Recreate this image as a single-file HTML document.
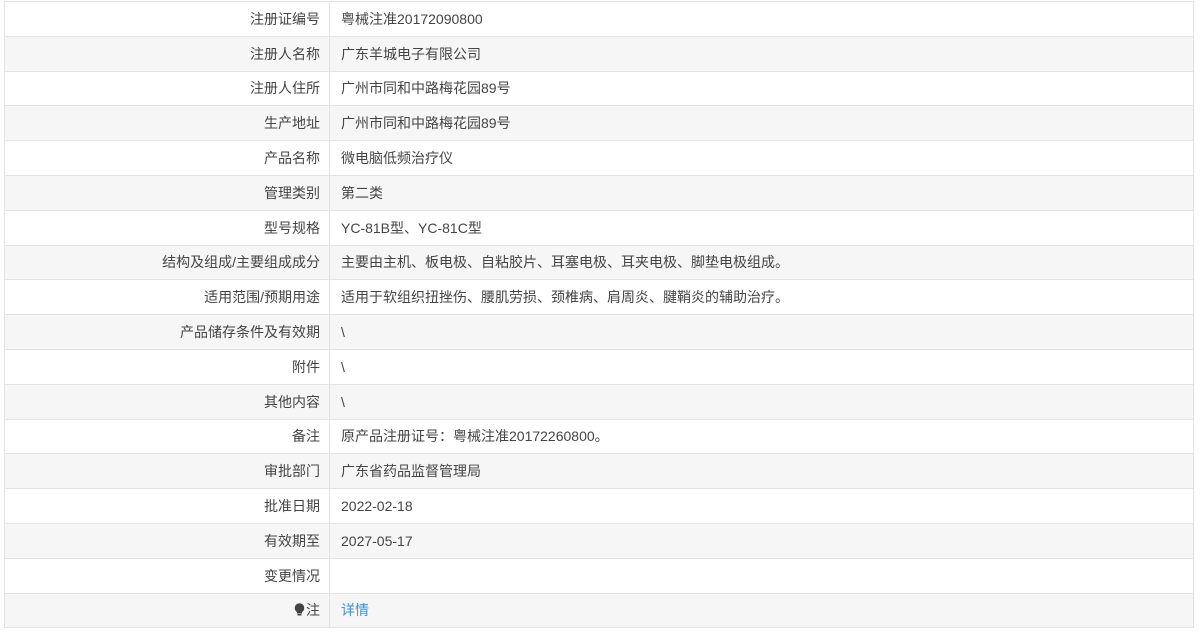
<!DOCTYPE html>
<html><head><meta charset="utf-8"><style>
html,body{margin:0;padding:0;background:#fff;width:1200px;height:632px;overflow:hidden}
body{font-family:"Liberation Sans","Noto Sans CJK SC",sans-serif;font-size:14px;color:#444}
table{position:absolute;left:4px;top:1px;width:1190px;border-collapse:collapse}
td{border:1px solid #e3e3e3;height:34.8px;padding:0;line-height:20px;box-sizing:border-box}
tr:nth-child(even) td{background:#f6f6f6}
td.l{width:325px;text-align:right;padding-right:9px}
td.v{padding-left:11px}
a{color:#3f8fd6;text-decoration:none}
</style></head><body>
<table>
<tr><td class="l">注册证编号</td><td class="v">粤械注准20172090800</td></tr>
<tr><td class="l">注册人名称</td><td class="v">广东羊城电子有限公司</td></tr>
<tr><td class="l">注册人住所</td><td class="v">广州市同和中路梅花园89号</td></tr>
<tr><td class="l">生产地址</td><td class="v">广州市同和中路梅花园89号</td></tr>
<tr><td class="l">产品名称</td><td class="v">微电脑低频治疗仪</td></tr>
<tr><td class="l">管理类别</td><td class="v">第二类</td></tr>
<tr><td class="l">型号规格</td><td class="v">YC-81B型、YC-81C型</td></tr>
<tr><td class="l">结构及组成/主要组成成分</td><td class="v">主要由主机、板电极、自粘胶片、耳塞电极、耳夹电极、脚垫电极组成。</td></tr>
<tr><td class="l">适用范围/预期用途</td><td class="v">适用于软组织扭挫伤、腰肌劳损、颈椎病、肩周炎、腱鞘炎的辅助治疗。</td></tr>
<tr><td class="l">产品储存条件及有效期</td><td class="v">\</td></tr>
<tr><td class="l">附件</td><td class="v">\</td></tr>
<tr><td class="l">其他内容</td><td class="v">\</td></tr>
<tr><td class="l">备注</td><td class="v">原产品注册证号：粤械注准20172260800。</td></tr>
<tr><td class="l">审批部门</td><td class="v">广东省药品监督管理局</td></tr>
<tr><td class="l">批准日期</td><td class="v">2022-02-18</td></tr>
<tr><td class="l">有效期至</td><td class="v">2027-05-17</td></tr>
<tr><td class="l">变更情况</td><td class="v"></td></tr>
<tr><td class="l"><svg width="11" height="13" viewBox="0 0 11 13" style="vertical-align:-1px;margin-right:1px"><circle cx="5.5" cy="5" r="4.8" fill="#444"/><path d="M3 8h5v2.5H3z" fill="#444"/><rect x="3.5" y="11" width="4" height="1.5" fill="#444"/></svg>注</td><td class="v"><a>详情</a></td></tr>
</table>
</body></html>
